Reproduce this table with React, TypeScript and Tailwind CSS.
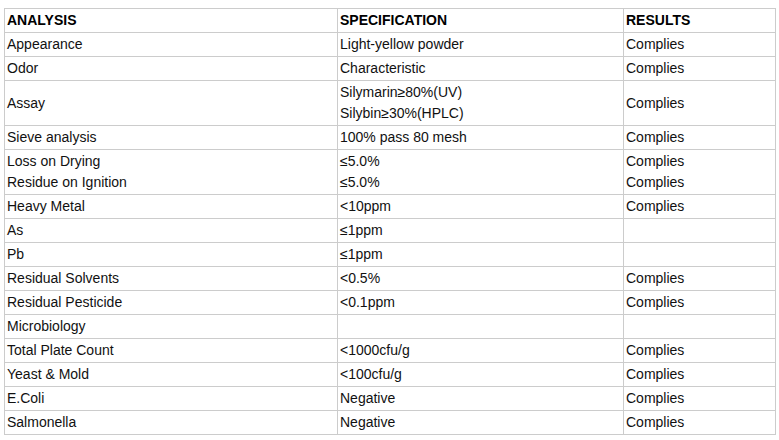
import React from "react";

type Row = {
  analysis: string[];
  spec: string[];
  result: string[];
};

const rows: Row[] = [
  { analysis: ["Appearance"], spec: ["Light-yellow powder"], result: ["Complies"] },
  { analysis: ["Odor"], spec: ["Characteristic"], result: ["Complies"] },
  { analysis: ["Assay"], spec: ["Silymarin≥80%(UV)", "Silybin≥30%(HPLC)"], result: ["Complies"] },
  { analysis: ["Sieve analysis"], spec: ["100% pass 80 mesh"], result: ["Complies"] },
  {
    analysis: ["Loss on Drying", "Residue on Ignition"],
    spec: ["≤5.0%", "≤5.0%"],
    result: ["Complies", "Complies"],
  },
  { analysis: ["Heavy Metal"], spec: ["<10ppm"], result: ["Complies"] },
  { analysis: ["As"], spec: ["≤1ppm"], result: [] },
  { analysis: ["Pb"], spec: ["≤1ppm"], result: [] },
  { analysis: ["Residual Solvents"], spec: ["<0.5%"], result: ["Complies"] },
  { analysis: ["Residual Pesticide"], spec: ["<0.1ppm"], result: ["Complies"] },
  { analysis: ["Microbiology"], spec: [], result: [] },
  { analysis: ["Total Plate Count"], spec: ["<1000cfu/g"], result: ["Complies"] },
  { analysis: ["Yeast & Mold"], spec: ["<100cfu/g"], result: ["Complies"] },
  { analysis: ["E.Coli"], spec: ["Negative"], result: ["Complies"] },
  { analysis: ["Salmonella"], spec: ["Negative"], result: ["Complies"] },
];

function Cell({ lines }: { lines: string[] }) {
  return (
    <td className="border border-[#cccccc] px-[2px] py-[1px] align-middle">
      {lines.length === 0 ? <span>&nbsp;</span> : lines.map((l, i) => <div key={i}>{l}</div>)}
    </td>
  );
}

export default function App() {
  return (
    <div
      className="bg-white w-[779px] h-[440px] pt-[8px] pl-[4px] text-[14px] leading-[21px] text-[#111]"
      style={{ fontFamily: '"Liberation Sans", Arial, sans-serif' }}
    >
      <table className="border-collapse table-fixed w-[771px]">
        <colgroup>
          <col className="w-[333px]" />
          <col className="w-[286px]" />
          <col className="w-[152px]" />
        </colgroup>
        <thead>
          <tr className="font-bold text-black text-left">
            <th className="border border-[#cccccc] px-[2px] py-[1px]">ANALYSIS</th>
            <th className="border border-[#cccccc] px-[2px] py-[1px]">SPECIFICATION</th>
            <th className="border border-[#cccccc] px-[2px] py-[1px]">RESULTS</th>
          </tr>
        </thead>
        <tbody>
          {rows.map((r, i) => (
            <tr key={i}>
              <Cell lines={r.analysis} />
              <Cell lines={r.spec} />
              <Cell lines={r.result} />
            </tr>
          ))}
        </tbody>
      </table>
    </div>
  );
}
